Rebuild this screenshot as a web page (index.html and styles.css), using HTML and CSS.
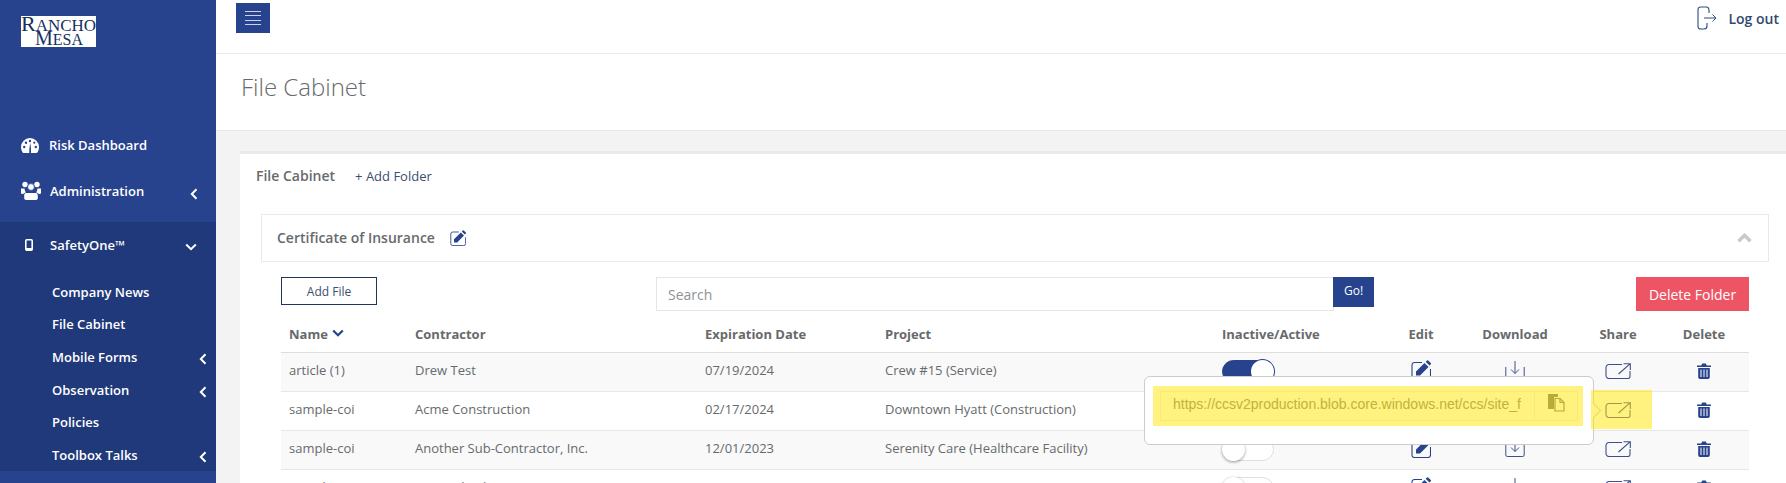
FILE: index.html
```html
<!DOCTYPE html>
<html lang="en">
<head>
<meta charset="utf-8">
<title>File Cabinet</title>
<link rel="stylesheet" href="styles.css">
</head>
<body>
<svg class="defs" aria-hidden="true">
  <symbol id="i-edit" viewBox="0 0 20 20">
    <path d="M11 2.500H3.500A2.500 2.500 0 0 0 1 5v12a2.500 2.500 0 0 0 2.500 2.500H17a2.500 2.500 0 0 0 2.500-2.500V9" fill="none" stroke="currentColor" stroke-width="1.100"/>
    <path d="M5 11.500 13.500 3l4 4-8.500 8.500H5zM14.700 1.800l1.300-1.300q.6-.6 1.200 0l2.600 2.600q.6.6 0 1.200l-1.300 1.300z" fill="currentColor"/>
  </symbol>
  <symbol id="i-down" viewBox="0 0 20 18">
    <path d="M.8 6v10A1.500 1.500 0 0 0 2.300 17.500h15.400a1.500 1.500 0 0 0 1.500-1.500V6" fill="none" stroke="currentColor" stroke-width="1"/>
    <path d="M10 0v12.500M6 8.500l4 4 4-4" fill="none" stroke="currentColor" stroke-width="1"/>
  </symbol>
  <symbol id="i-share" viewBox="0 0 26 16">
    <path d="M17 1.500H4A3 3 0 0 0 1 4.500v8a3 3 0 0 0 3 3h19a2 2 0 0 0 2-2V8" fill="none" stroke="currentColor" stroke-width="1.100"/>
    <path d="M13.500 11 25 .8M18.500.8H25.300V7" fill="none" stroke="currentColor" stroke-width="1.100"/>
  </symbol>
  <symbol id="i-trash" viewBox="0 0 14 16">
    <path d="M0 2.500h4.300L5.200.5h3.600l.9 2H14V4H0zM1.200 5h11.600v9.200a1.800 1.800 0 0 1-1.800 1.800H3a1.800 1.800 0 0 1-1.800-1.800z" fill="currentColor"/>
    <path d="M4 6.500v7.500M7 6.500v7.500M10 6.500v7.500" stroke="#fff" stroke-width="1"/>
  </symbol>
  <symbol id="i-left" viewBox="0 0 8 12">
    <path d="M6.500 1.200 1.800 6l4.700 4.800" fill="none" stroke="currentColor" stroke-width="2"/>
  </symbol>
</svg>

<aside class="sidebar">
  <div class="logo-area">
    <div class="logo">
      <span class="logo-line"><b>R</b>ANCHO</span>
      <span class="logo-line logo-second"><b>M</b>ESA</span>
    </div>
  </div>
  <nav>
    <a class="nav-item">
      <svg class="nav-icon gauge" viewBox="0 0 18 15"><path fill="#fff" d="M9 0a9 9 0 0 1 9 9c0 2-.5 3.800-1.500 5.300-.2.400-.6.700-1 .7H2.500c-.4 0-.8-.3-1-.7A9.800 9.800 0 0 1 0 9a9 9 0 0 1 9-9z"/><g fill="#27438e"><circle cx="3.200" cy="9" r="1.200"/><circle cx="5" cy="4.700" r="1.200"/><circle cx="9" cy="3" r="1.200"/><circle cx="14.800" cy="9" r="1.200"/><circle cx="13.300" cy="4.700" r="1.100"/><path d="M8.300 15V11l1-6.500L10 11v4z"/></g></svg>
      <span>Risk Dashboard</span>
    </a>
    <a class="nav-item nav-admin">
      <svg class="nav-icon users" viewBox="0 0 20 19"><g fill="#fff"><circle cx="4" cy="3.500" r="2.700"/><circle cx="16" cy="3.500" r="2.700"/><circle cx="10" cy="6" r="3.400" stroke="#27438e" stroke-width=".8"/><path d="M0 7.500h3.500a5 5 0 0 0 1.500 3.700c-1.500.5-2.500 1.300-3 1.800H1.300A1.300 1.300 0 0 1 0 11.700zM20 7.500h-3.500a5 5 0 0 1-1.500 3.700c1.500.5 2.500 1.300 3 1.800h.7a1.300 1.300 0 0 0 1.300-1.300zM5 12h10c1 0 1.800 1 1.800 2.500v2.500c0 1-.8 2-1.800 2H5c-1 0-1.800-1-1.800-2v-2.500C3.200 13 4 12 5 12z"/></g></svg>
      <span class="admin-label">Administration</span>
      <svg class="chev chev-admin"><use href="#i-left"/></svg>
    </a>
    <div class="nav-active">
      <a class="nav-item nav-safety">
        <svg class="nav-icon mobile" viewBox="0 0 8 12"><rect x=".8" y=".8" width="6.400" height="10.400" rx="1" fill="none" stroke="#fff" stroke-width="1.600"/><rect x="1" y="9" width="6" height="2.500" fill="#fff"/></svg>
        <span class="safety-label">SafetyOne™</span>
        <svg class="chev-down" viewBox="0 0 12 8"><path d="M1.200 1.500 6 6.200l4.800-4.700" fill="none" stroke="#fff" stroke-width="2"/></svg>
      </a>
      <ul class="subnav">
        <li>Company News</li>
        <li>File Cabinet</li>
        <li>Mobile Forms<svg class="chev"><use href="#i-left"/></svg></li>
        <li>Observation<svg class="chev"><use href="#i-left"/></svg></li>
        <li>Policies</li>
        <li>Toolbox Talks<svg class="chev"><use href="#i-left"/></svg></li>
      </ul>
    </div>
  </nav>
</aside>

<div class="main">
  <header class="topbar">
    <button class="burger" aria-label="Menu"><i></i><i></i><i></i><i></i></button>
    <a class="logout">
      <svg class="logout-icon" viewBox="0 0 20 24"><path d="M10 1H3.500A2.500 2.500 0 0 0 1 3.500v17A2.500 2.500 0 0 0 3.500 23H7a3 3 0 0 0 3-3v-3M10 1a3 3 0 0 1 2 3v3" fill="none" stroke="#2f4a7a" stroke-width="1.100"/><path d="M7 12h12M15.500 8.500 19 12l-3.500 3.500" fill="none" stroke="#2f4a7a" stroke-width="1"/></svg>
      <span>Log out</span>
    </a>
  </header>
  <div class="titlebar"><h1>File Cabinet</h1></div>
  <div class="content">
    <section class="card">
      <div class="card-head">
        <h2>File Cabinet</h2>
        <a class="add-folder">+ Add Folder</a>
      </div>
      <div class="folder">
        <span class="folder-name">Certificate of Insurance</span>
        <svg class="folder-edit"><use href="#i-edit"/></svg>
        <svg class="chev-up" viewBox="0 0 14 9"><path d="M1.500 7.500 7 2l5.500 5.500" fill="none" stroke="#c9c9c9" stroke-width="3.200"/></svg>
      </div>
      <div class="folder-body">
        <div class="toolbar">
          <button class="btn-add">Add File</button>
          <div class="search">
            <input class="search-input" type="text" placeholder="Search">
            <button class="btn-go">Go!</button>
          </div>
          <button class="btn-delete">Delete Folder</button>
        </div>
        <table class="files">
          <colgroup>
            <col class="c-name"><col class="c-contractor"><col class="c-exp"><col class="c-project"><col class="c-active"><col class="c-edit"><col class="c-down"><col class="c-share"><col class="c-del">
          </colgroup>
          <thead>
            <tr>
              <th>Name <svg class="sort" viewBox="0 0 12 8"><path d="M1.200 1.500 6 6.200l4.800-4.700" fill="none" stroke="#27438e" stroke-width="2.200"/></svg></th>
              <th>Contractor</th>
              <th>Expiration Date</th>
              <th>Project</th>
              <th>Inactive/Active</th>
              <th class="ctr">Edit</th>
              <th class="ctr">Download</th>
              <th class="ctr">Share</th>
              <th class="ctr">Delete</th>
            </tr>
          </thead>
          <tbody>
            <tr>
              <td>article (1)</td><td>Drew Test</td><td>07/19/2024</td><td>Crew #15 (Service)</td>
              <td><span class="toggle on"></span></td>
              <td class="ctr"><svg class="ico-edit"><use href="#i-edit"/></svg></td>
              <td class="ctr"><svg class="ico-down"><use href="#i-down"/></svg></td>
              <td class="ctr"><svg class="ico-share"><use href="#i-share"/></svg></td>
              <td class="ctr"><svg class="ico-trash"><use href="#i-trash"/></svg></td>
            </tr>
            <tr>
              <td>sample-coi</td><td>Acme Construction</td><td>02/17/2024</td><td>Downtown Hyatt (Construction)</td>
              <td><span class="toggle on"></span></td>
              <td class="ctr"><svg class="ico-edit"><use href="#i-edit"/></svg></td>
              <td class="ctr"><svg class="ico-down"><use href="#i-down"/></svg></td>
              <td class="ctr"><svg class="ico-share"><use href="#i-share"/></svg></td>
              <td class="ctr"><svg class="ico-trash"><use href="#i-trash"/></svg></td>
            </tr>
            <tr>
              <td>sample-coi</td><td>Another Sub-Contractor, Inc.</td><td>12/01/2023</td><td>Serenity Care (Healthcare Facility)</td>
              <td><span class="toggle"></span></td>
              <td class="ctr"><svg class="ico-edit"><use href="#i-edit"/></svg></td>
              <td class="ctr"><svg class="ico-down"><use href="#i-down"/></svg></td>
              <td class="ctr"><svg class="ico-share"><use href="#i-share"/></svg></td>
              <td class="ctr"><svg class="ico-trash"><use href="#i-trash"/></svg></td>
            </tr>
            <tr>
              <td>sample-coi</td><td>Monarch Tile</td><td></td><td></td>
              <td><span class="toggle"></span></td>
              <td class="ctr"><svg class="ico-edit"><use href="#i-edit"/></svg></td>
              <td class="ctr"><svg class="ico-down"><use href="#i-down"/></svg></td>
              <td class="ctr"><svg class="ico-share"><use href="#i-share"/></svg></td>
              <td class="ctr"><svg class="ico-trash"><use href="#i-trash"/></svg></td>
            </tr>
          </tbody>
        </table>
        <div class="popover">
          <div class="url-group">
            <span class="url">https://ccsv2production.blob.core.windows.net/ccs/site_f</span>
            <span class="copy">
              <svg class="copy-icon" viewBox="0 0 18 19"><path fill="#707070" d="M1 1h10v3h-4v12H1z"/><path d="M8 5.500h5l4 4v8.500H8z" fill="#fff" stroke="#707070" stroke-width="1.200"/><path d="M13 5.500v4h4" fill="none" stroke="#707070" stroke-width="1.200"/></svg>
            </span>
          </div>
          <span class="arrow"></span>
          <span class="hl hl-url"></span>
          <span class="hl hl-share"></span>
        </div>
      </div>
    </section>
  </div>
</div>
</body>
</html>
```
FILE: styles.css
```css
* { box-sizing: border-box; }
html, body { height: 100%; margin: 0; }
body {
  display: flex;
  height: 483px;
  overflow: hidden;
  font-family: "Open Sans", "Liberation Sans", sans-serif;
  font-size: 13px;
  color: #676a6c;
  background: #f3f3f4;
}
.defs { display: none; }

/* Sidebar */
.sidebar {
  flex: 0 0 216px;
  background: #27438e;
  color: #fff;
  font-weight: 600;
  display: flex;
  flex-direction: column;
}
.logo-area { height: 122px; padding: 16px 0 0 21px; }
.logo {
  width: 75px;
  height: 31px;
  background: #fff;
  color: #16305f;
  font-family: "Liberation Serif", serif;
  font-weight: 400;
  display: flex;
  flex-direction: column;
  font-size: 17px;
  line-height: 15px;
}
.logo-line { height: 15px; display: block; white-space: nowrap; }
.logo-line b { font-weight: 400; font-size: 22px; }
.logo-second { padding-left: 14px; font-size: 16px; }
.logo-second b { font-size: 20px; }
.nav-item { display: flex; align-items: center; height: 46px; padding-left: 21px; position: relative; }
.nav-icon { flex: none; display: block; }
.gauge { width: 18px; height: 15px; margin-right: 10px; }
.users { width: 20px; height: 19px; margin-right: 9px; margin-top: -2px; }
.nav-admin { margin-bottom: 8px; }
.admin-label { margin-top: -1px; }
.chev { width: 8px; height: 12px; color: #fff; display: block; }
.chev-admin { margin-left: 46px; margin-top: 5px; }
.nav-active { background: #20397a; flex: 1; }
.mobile { width: 8px; height: 12px; margin-left: 4px; margin-right: 17px; }
.safety-label { width: 135px; }
.chev-down { width: 12px; height: 8px; margin-top: 3px; }
.subnav { list-style: none; margin: 7.500px 0 0; padding: 0 0 0 52px; }
.subnav li { height: 32.600px; display: flex; align-items: center; }
.subnav .chev { margin-left: auto; margin-right: 9px; margin-top: 4px; }

/* Main */
.main { flex: 1; min-width: 0; display: flex; flex-direction: column; }
.topbar {
  height: 54px;
  flex: none;
  background: #fff;
  border-bottom: 1px solid #e7eaec;
  display: flex;
  align-items: flex-start;
  justify-content: space-between;
  padding: 3px 7px 0 20px;
}
.burger {
  width: 34px;
  height: 30px;
  padding: 0;
  border: 0;
  background: #27438e;
  display: flex;
  flex-direction: column;
  align-items: center;
  justify-content: center;
  gap: 3.600px;
}
.burger i { display: block; width: 16px; height: 1px; background: #c9d2ea; }
.logout { display: flex; align-items: center; color: #2f4a6d; font-size: 14px; font-weight: 600; margin-top: 3px; }
.logout-icon { width: 20px; height: 24px; margin-right: 11px; }
.titlebar {
  height: 77px;
  flex: none;
  background: #fff;
  border-bottom: 1px solid #e7eaec;
  padding: 0 0 0 25px;
  display: flex;
  align-items: center;
}
h1 { margin: -12px 0 0; font-size: 24px; font-weight: 300; color: #676a6c; }
.content { flex: 1; padding: 20px 0 0 24px; min-height: 0; overflow: hidden; }
.card { background: #fff; border-top: 3px solid #e7eaec; height: 100%; padding: 0 17px 0 21px; overflow: hidden; }
.card-head { display: flex; align-items: baseline; padding-top: 12px; height: 60px; margin-left: -5px; }
h2 { margin: 0 20px 0 0; font-size: 14px; font-weight: 600; color: #676a6c; }
.add-folder { color: #3b4f6e; font-size: 13px; }
.folder {
  height: 48px;
  border: 1px solid #e7eaec;
  display: flex;
  align-items: center;
  padding: 0 15px;
}
.folder-name { font-size: 14px; font-weight: 600; color: #676a6c; margin-top: -2px; }
.folder-edit { width: 16px; height: 16px; margin-left: 15px; color: #27438e; }
.chev-up { width: 15px; height: 10px; margin-left: auto; margin-right: 1px; }
.folder-body { margin: 15px 20px 0 20px; position: relative; }
.toolbar { display: flex; align-items: flex-start; height: 34px; }
.btn-add {
  width: 96px;
  height: 28px;
  border: 1px solid #1f3658;
  background: #fff;
  color: #3b4f6e;
  font: 400 12px "Open Sans", sans-serif;
  padding: 0;
}
.search { display: flex; margin-left: 279px; align-items: flex-start; }
.search-input {
  width: 678px;
  height: 34px;
  border: 1px solid #e5e6e7;
  padding: 1px 11px 0;
  font: 400 14px "Open Sans", sans-serif;
  outline: 0;
}
.search-input::placeholder { color: #8f9295; }
.btn-go {
  width: 41px;
  height: 30px;
  border: 0;
  background: #27438e;
  color: #fff;
  font: 400 12px "Open Sans", sans-serif;
  padding: 0 0 3px;
  margin-left: -1px;
}
.btn-delete {
  margin-left: auto;
  width: 113px;
  height: 34px;
  border: 0;
  background: #ed5565;
  color: #fff;
  font: 400 14px "Open Sans", sans-serif;
  padding: 0;
}

/* Table */
.files { width: 1468px; table-layout: fixed; border-collapse: collapse; }
.c-name { width: 126px; }
.c-contractor { width: 290px; }
.c-exp { width: 180px; }
.c-project { width: 337px; }
.c-active { width: 175px; }
.c-edit { width: 64px; }
.c-down { width: 124px; }
.c-share { width: 82px; }
.c-del { width: 90px; }
th, td { padding: 0 8px; text-align: left; white-space: nowrap; }
th { height: 41px; font-weight: 700; border-bottom: 1px solid #ddd; padding-top: 5px; }
td { height: 39px; border-bottom: 1px solid #e7e7e7; padding-bottom: 3px; }
tbody tr:nth-child(odd) { background: #f9f9f9; }
th.ctr, td.ctr { text-align: center; }
td.ctr { padding-bottom: 4px; }
.sort { width: 12px; height: 8px; margin-left: 1px; vertical-align: 2px; color: #27438e; }
td svg { display: inline-block; vertical-align: middle; }
td .ico-edit { display: block; width: 20px; height: 20px; margin: 0 auto; color: #27438e; }
.ico-down { width: 20px; height: 18px; color: #3d4f8a; }
.ico-share { width: 26px; height: 16px; color: #3d4f8a; }
.ico-trash { width: 14px; height: 16px; color: #27438e; }
.toggle {
  display: block;
  position: relative;
  width: 52px;
  height: 23px;
  margin-top: 3px;
  border-radius: 12px;
  border: 1px solid #dfdfdf;
  background: #fff;
}
.toggle::after {
  content: "";
  position: absolute;
  left: -1px;
  top: -1px;
  width: 23px;
  height: 23px;
  border-radius: 50%;
  background: #fff;
  box-shadow: 0 1px 3px rgba(0, 0, 0, .4);
}
.toggle.on { background: #27438e; border-color: #27438e; }
.toggle.on::after { left: auto; right: -1px; box-shadow: 0 0 0 1px #27438e; }

/* Share popover */
.popover {
  position: absolute;
  left: 863px;
  top: 99px;
  width: 450px;
  height: 69px;
  background: #fff;
  border: 1px solid #ccc;
  border-radius: 6px;
  padding: 14px 15px 0 15px;
}
.url-group { display: flex; height: 30px; border: 1px solid #eee; width: 418px; }
.url {
  flex: 1;
  padding: 0 0 0 12px;
  font: 400 14px/24px "Liberation Sans", sans-serif;
  color: #808080;
  overflow: hidden;
  white-space: nowrap;
}
.copy { flex: 0 0 43px; border-left: 1px solid #eee; display: flex; justify-content: center; padding-top: 1px; }
.copy-icon { width: 18px; height: 19px; }
.arrow {
  position: absolute;
  right: -6px;
  top: 28px;
  width: 11px;
  height: 11px;
  background: #fff;
  border: 1px solid #ccc;
  border-width: 1px 1px 0 0;
  transform: rotate(45deg);
}
.hl { position: absolute; background: rgba(255, 229, 0, .5); }
.hl-url { left: 8px; top: 9px; width: 430px; height: 40px; }
.hl-share { left: 446px; top: 13px; width: 61px; height: 39px; }
```
